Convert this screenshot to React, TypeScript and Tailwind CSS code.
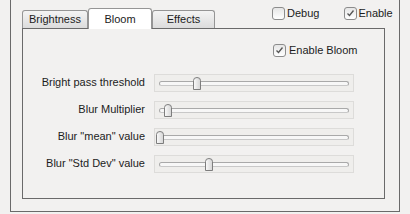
import React from 'react';

const sliders = [
  { label: 'Bright pass threshold', pos: 38 },
  { label: 'Blur Multiplier', pos: 9 },
  { label: 'Blur "mean" value', pos: 1 },
  { label: 'Blur "Std Dev" value', pos: 50 },
];

const Check: React.FC<{ checked?: boolean }> = ({ checked }) => (
  <span className="flex h-[13px] w-[13px] items-center justify-center rounded-[3px] border border-[#8c8c8c] bg-gradient-to-b from-[#e6e6e6] to-white">
    {checked && (
      <svg width="9" height="9" viewBox="0 0 9 9">
        <polyline points="1.5,4.5 3.5,6.5 7.5,1.5" fill="none" stroke="#555" strokeWidth="1.3" />
      </svg>
    )}
  </span>
);

const Slider: React.FC<{ pos: number }> = ({ pos }) => (
  <div className="relative h-[18px] w-[200px] border border-[#dddcda] bg-[#efeeec]">
    {/* groove */}
    <div className="absolute left-[4px] right-[4px] top-[6px] h-[5px] rounded-full border border-[#a9a9a9] border-b-[#c8c8c8] bg-[#f7f7f7]" />
    {/* handle */}
    <svg
      className="absolute top-[2px]"
      style={{ left: pos }}
      width="8"
      height="13"
      viewBox="0 0 8 13"
    >
      <defs>
        <linearGradient id="hg" x1="0" y1="0" x2="1" y2="0">
          <stop offset="0" stopColor="#fbfbfb" />
          <stop offset="1" stopColor="#d4d4d4" />
        </linearGradient>
      </defs>
      <path d="M0.5 12.5 V3.5 Q0.5 0.5 4 0.5 Q7.5 0.5 7.5 3.5 V12.5 Z" fill="url(#hg)" stroke="#7d7d7d" />
    </svg>
  </div>
);

export default function App() {
  return (
    <div
      className="h-[214px] w-[410px] bg-[#f2f1f0] pl-[10px] text-[11px] text-[#1c1c1c]"
      style={{ fontFamily: '"Liberation Sans", Arial, sans-serif' }}
    >
      <div className="h-[212px] w-[390px] border-x border-b border-[#6a6a6a] pl-[11px]">
        {/* header: tabs + checkboxes */}
        <div className="flex h-[28px]">
          <div className="flex items-end">
            <div className="flex h-[18px] w-[66px] items-center justify-center rounded-t-[3px] border border-b-0 border-[#959595] bg-gradient-to-b from-[#f4f4f4] to-[#dcdcdc]">
              Brightness
            </div>
            <div className="relative z-10 -mb-px flex h-[21px] w-[64px] items-center justify-center rounded-t-[3px] border border-b-0 border-[#959595] bg-white">
              Bloom
            </div>
            <div className="flex h-[18px] w-[63px] items-center justify-center rounded-t-[3px] border border-b-0 border-[#959595] bg-gradient-to-b from-[#f4f4f4] to-[#dcdcdc]">
              Effects
            </div>
          </div>
          <div className="ml-[57px] mt-[7px] flex h-[13px] items-center gap-[2px]">
            <Check />
            <span>Debug</span>
          </div>
          <div className="ml-[25px] mt-[7px] flex h-[13px] items-center gap-[1px]">
            <Check checked />
            <span>Enable</span>
          </div>
        </div>

        {/* panel */}
        <div className="h-[171px] w-[363px] border border-[#6a6a6a]">
          <div className="ml-[250px] mt-[13px] flex items-center gap-[3px]">
            <Check checked />
            <span>Enable Bloom</span>
          </div>
          <div className="mt-[15px] flex flex-col gap-[9px]">
            {sliders.map((s) => (
              <div key={s.label} className="flex items-center">
                <div className="w-[131px] pr-[9px] text-right">{s.label}</div>
                <Slider pos={s.pos} />
              </div>
            ))}
          </div>
        </div>
      </div>
    </div>
  );
}
